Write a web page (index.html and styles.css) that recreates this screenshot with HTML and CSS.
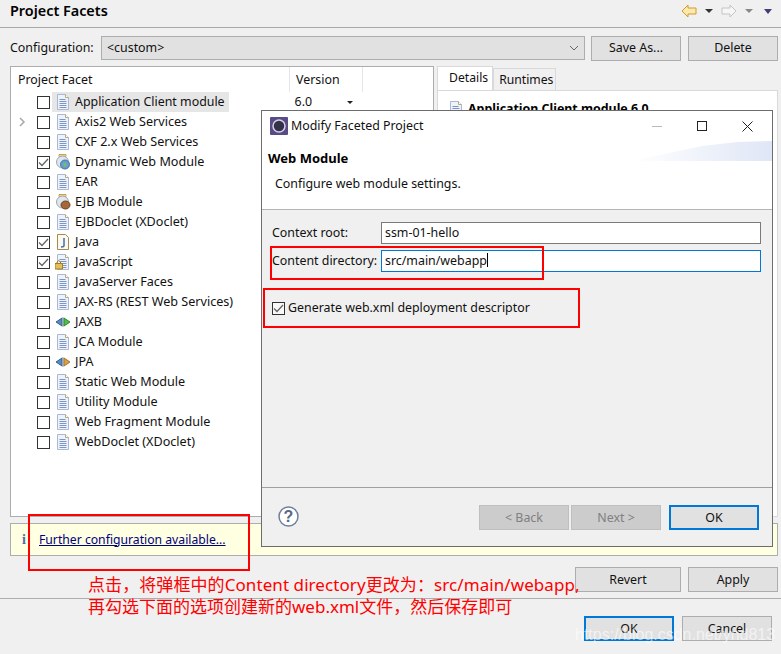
FILE: index.html
```html
<!DOCTYPE html>
<html lang="en">
<head>
<meta charset="utf-8">
<title>Project Facets</title>
<link rel="stylesheet" href="styles.css">
</head>
<body>
<svg class="defs" width="0" height="0">
  <symbol id="doc" viewBox="0 0 16 16">
    <path d="M2.500 .5h8l3 3v12h-11z" fill="#eef2fa" stroke="#a9b8d6"/>
    <path d="M10.500 .5v3h3" fill="#fff" stroke="#b9a878"/>
    <path d="M4.500 5.500h6M4.500 7.500h7M4.500 9.500h7M4.500 11.500h7M4.500 13.500h7" stroke="#7d95c4"/>
  </symbol>
  <symbol id="jar" viewBox="0 0 16 16">
    <path d="M4 .5h7v2H4z" fill="#f4dd9c" stroke="#c9a24f"/>
    <circle cx="7.500" cy="8" r="6" fill="#dfe6ee" stroke="#9aa7b5"/>
  </symbol>
  <symbol id="arrows" viewBox="0 0 16 16">
    <path d="M7 4v8L1 8z" fill="#5b8ac0" stroke="#34628f"/>
    <path d="M8 3v10" stroke="#8aa0b8"/>
  </symbol>
  <symbol id="tick" viewBox="0 0 11 9">
    <path d="M1 4.500l3 3 6-6.500" fill="none" stroke="#666" stroke-width="1.300"/>
  </symbol>
</svg>

<header class="page-head">
  <h1 class="page-title">Project Facets</h1>
  <div class="nav-icons">
    <svg width="16" height="14" viewBox="0 0 16 14"><path d="M1 7l6-6v3h8v6H7v3z" fill="#fbe9b0" stroke="#d39a2a"/></svg>
    <i class="caret dark"></i>
    <svg width="16" height="14" viewBox="0 0 16 14"><path d="M15 7L9 1v3H1v6h8v3z" fill="#f6f6f6" stroke="#c4c4c4"/></svg>
    <i class="caret grey"></i>
    <i class="caret purple"></i>
  </div>
</header>

<main class="content">
  <div class="config-row">
    <span class="config-label">Configuration:</span>
    <div class="combo"><span>&lt;custom&gt;</span>
      <svg width="10" height="6" viewBox="0 0 10 6"><path d="M1 1l4 4 4-4" fill="none" stroke="#666"/></svg>
    </div>
    <button class="btn w-save">Save As...</button>
    <button class="btn w-delete">Delete</button>
  </div>

  <div class="panels">
    <section class="facets">
      <div class="facet-head">
        <span class="col-name">Project Facet</span>
        <span class="col-version">Version</span>
      </div>
      <ul class="facet-list">
        <li class="facet"><span class="twisty"></span><span class="check"></span><span class="fcell selected"><svg class="ficon"><use href="#doc"/></svg><span class="fname tight">Application Client module</span></span><span class="fversion">6.0<i class="caret mini"></i></span></li>
        <li class="facet"><span class="twisty"><svg width="7" height="10" viewBox="0 0 7 10"><path d="M1 1l4 4-4 4" fill="none" stroke="#a8a8a8" stroke-width="1.500"/></svg></span><span class="check"></span><span class="fcell"><svg class="ficon"><use href="#doc"/></svg><span class="fname">Axis2 Web Services</span></span></li>
        <li class="facet"><span class="twisty"></span><span class="check"></span><span class="fcell"><svg class="ficon"><use href="#doc"/></svg><span class="fname">CXF 2.x Web Services</span></span></li>
        <li class="facet"><span class="twisty"></span><span class="check"><svg class="tick"><use href="#tick"/></svg></span><span class="fcell"><svg class="ficon" viewBox="0 0 16 16"><use href="#jar" width="16" height="16"/><circle cx="10" cy="10.500" r="4.500" fill="#5f9fd6" stroke="#47719b"/><path d="M8 9h3l1 3-3 1z" fill="#7fb86a"/></svg><span class="fname">Dynamic Web Module</span></span></li>
        <li class="facet"><span class="twisty"></span><span class="check"></span><span class="fcell"><svg class="ficon"><use href="#doc"/></svg><span class="fname">EAR</span></span></li>
        <li class="facet"><span class="twisty"></span><span class="check"></span><span class="fcell"><svg class="ficon" viewBox="0 0 16 16"><use href="#jar" width="16" height="16"/><ellipse cx="10.500" cy="11" rx="4.500" ry="4" fill="#a5663a" stroke="#6e3f1f"/></svg><span class="fname">EJB Module</span></span></li>
        <li class="facet"><span class="twisty"></span><span class="check"></span><span class="fcell"><svg class="ficon"><use href="#doc"/></svg><span class="fname">EJBDoclet (XDoclet)</span></span></li>
        <li class="facet"><span class="twisty"></span><span class="check"><svg class="tick"><use href="#tick"/></svg></span><span class="fcell"><svg class="ficon" viewBox="0 0 16 16"><path d="M2.500.5h8l3 3v12h-11z" fill="#fbf8ee" stroke="#a58a4c"/><path d="M9 4v7.500q0 1.500-3 1.500" fill="none" stroke="#3f6fb5" stroke-width="1.500"/></svg><span class="fname">Java</span></span></li>
        <li class="facet"><span class="twisty"></span><span class="check"><svg class="tick"><use href="#tick"/></svg></span><span class="fcell"><svg class="ficon" viewBox="0 0 16 16"><use href="#doc" width="16" height="16"/><path d="M0 9.500h7.500V15H0z" fill="#e5bf54" stroke="#a17f22"/><path d="M2 9.500V8q1.700-3 3.500 0v1.500" fill="none" stroke="#a17f22"/></svg><span class="fname">JavaScript</span></span></li>
        <li class="facet"><span class="twisty"></span><span class="check"></span><span class="fcell"><svg class="ficon"><use href="#doc"/></svg><span class="fname">JavaServer Faces</span></span></li>
        <li class="facet"><span class="twisty"></span><span class="check"></span><span class="fcell"><svg class="ficon"><use href="#doc"/></svg><span class="fname">JAX-RS (REST Web Services)</span></span></li>
        <li class="facet"><span class="twisty"></span><span class="check"></span><span class="fcell"><svg class="ficon" viewBox="0 0 16 16"><use href="#arrows" width="16" height="16"/><path d="M9 4v8l6-4z" fill="#58b94e" stroke="#2f8a2a"/></svg><span class="fname">JAXB</span></span></li>
        <li class="facet"><span class="twisty"></span><span class="check"></span><span class="fcell"><svg class="ficon"><use href="#doc"/></svg><span class="fname">JCA Module</span></span></li>
        <li class="facet"><span class="twisty"></span><span class="check"></span><span class="fcell"><svg class="ficon" viewBox="0 0 16 16"><use href="#arrows" width="16" height="16"/><path d="M9 4v8l6-4z" fill="#d9a04c" stroke="#a4742a"/></svg><span class="fname">JPA</span></span></li>
        <li class="facet"><span class="twisty"></span><span class="check"></span><span class="fcell"><svg class="ficon"><use href="#doc"/></svg><span class="fname">Static Web Module</span></span></li>
        <li class="facet"><span class="twisty"></span><span class="check"></span><span class="fcell"><svg class="ficon"><use href="#doc"/></svg><span class="fname">Utility Module</span></span></li>
        <li class="facet"><span class="twisty"></span><span class="check"></span><span class="fcell"><svg class="ficon"><use href="#doc"/></svg><span class="fname">Web Fragment Module</span></span></li>
        <li class="facet"><span class="twisty"></span><span class="check"></span><span class="fcell"><svg class="ficon"><use href="#doc"/></svg><span class="fname">WebDoclet (XDoclet)</span></span></li>
      </ul>
    </section>
    <section class="details">
      <div class="tabs">
        <span class="tab active">Details</span>
        <span class="tab">Runtimes</span>
      </div>
      <div class="tab-body">
        <svg class="ficon"><use href="#doc"/></svg>
        <strong>Application Client module 6.0</strong>
      </div>
    </section>
  </div>

  <div class="info-bar">
    <span class="info-i">i</span>
    <a class="info-link" href="#">Further configuration available...</a>
  </div>

  <div class="revert-row">
    <button class="btn w-revert">Revert</button>
    <button class="btn w-apply">Apply</button>
  </div>
</main>

<footer class="page-foot">
  <button class="btn primary w-ok">OK</button>
  <button class="btn w-cancel">Cancel</button>
</footer>

<div class="dialog">
  <div class="dlg-title">
    <svg width="18" height="18" viewBox="0 0 18 18"><rect width="18" height="18" rx="1" fill="#5a4a86"/><circle cx="9" cy="9" r="6" fill="#33324a" stroke="#d5d3e0" stroke-width="1.500"/></svg>
    <span class="dlg-name">Modify Faceted Project</span>
    <div class="win-btns">
      <i class="win-min"></i>
      <i class="win-max"></i>
      <svg width="11" height="11" viewBox="0 0 11 11"><path d="M.5.500l10 10M10.500.500l-10 10" stroke="#222"/></svg>
    </div>
  </div>
  <div class="dlg-banner">
    <h2 class="banner-title">Web Module</h2>
    <p class="banner-sub">Configure web module settings.</p>
  </div>
  <div class="dlg-body">
    <label class="field">
      <span class="field-label">Context root:</span>
      <span class="input">ssm-01-hello</span>
    </label>
    <label class="field">
      <span class="field-label">Content directory:</span>
      <span class="input focus">src/main/webapp<i class="cursor"></i></span>
    </label>
    <label class="gen-row">
      <span class="check small"><svg class="tick"><use href="#tick"/></svg></span>
      <span>Generate web.xml deployment descriptor</span>
    </label>
  </div>
  <div class="dlg-foot">
    <svg class="help" width="21" height="21" viewBox="0 0 21 21"><circle cx="10.500" cy="10.500" r="9.500" fill="#fff" stroke="#6f7f99" stroke-width="1.500"/><text x="10.500" y="16" class="help-q">?</text></svg>
    <button class="btn disabled w-back">&lt; Back</button>
    <button class="btn disabled w-next">Next &gt;</button>
    <button class="btn primary w-dok">OK</button>
  </div>
</div>

<div class="mark m1"></div>
<div class="mark m2"></div>
<div class="mark m3"></div>
<p class="note"><span class="note-first">点击，将弹框中的Content directory更改为：src/main/webapp,</span><br>再勾选下面的选项创建新的web.xml文件，然后保存即可</p>
<span class="watermark">https://blog.csdn.net/ynd813</span>
</body>
</html>
```
FILE: styles.css
```css
* { box-sizing: border-box; }
html, body { margin: 0; padding: 0; }
body {
  width: 781px;
  height: 654px;
  overflow: hidden;
  position: relative;
  background: #f0f0f0;
  color: #111;
  font: 12.400px/20px "Noto Sans", "Noto Sans CJK SC", sans-serif;
}
.defs { position: absolute; }

.page-head {
  height: 28px;
  display: flex;
  align-items: center;
  justify-content: space-between;
  padding: 0 9px 5px 10px;
  border-bottom: 1px solid #a8a8a8;
}
.page-title { margin: 0; font-size: 14.400px; font-weight: 600; color: #000; }
.nav-icons { display: flex; align-items: center; gap: 8px; }
.caret { display: block; width: 0; height: 0; border: 4px solid transparent; border-bottom: 0; }
.caret.dark { border-top-color: #333; }
.caret.grey { border-top-color: #888; }
.caret.purple { border-width: 5px 4.500px 0; border-top-color: #4b3a78; margin-left: 3px; }
.caret.mini { border-width: 3px 3px 0; border-top-color: #222; margin-left: 35px; display: inline-block; vertical-align: middle; }

.content { padding: 8px 3px 0 10px; height: 570px; }
.config-row { display: flex; align-items: center; height: 24px; margin-bottom: 6px; }
.config-label { width: 91px; }
.combo {
  width: 484px; height: 24px; display: flex; align-items: center; justify-content: space-between;
  padding: 0 5px; background: #e1e1e1; border: 1px solid #adadad; margin-right: 6px;
}
.btn {
  height: 25px; padding: 0; font: inherit; color: #111; background: #e1e1e1;
  border: 1px solid #adadad; border-radius: 0;
}
.btn.primary { border: 2px solid #0078d7; }
.btn.disabled { background: #ccc; border-color: #bfbfbf; color: #808080; }
.w-save { width: 90px; margin-right: 7px; }
.w-delete { width: 90px; }

.panels { display: flex; height: 451px; }
.facets { width: 424px; background: #fff; border: 1px solid #adadad; margin-right: 3px; overflow: hidden; }
.facet-head { display: flex; height: 25px; align-items: center; }
.col-name { width: 278px; padding-left: 7px; }
.col-version { width: 74px; height: 25px; padding-left: 6px; line-height: 25px; border-left: 1px solid #e5e5e5; border-right: 1px solid #e5e5e5; }
.facet-list { margin: 0; padding: 0; list-style: none; font-size: 12.600px; }
.facet { height: 20px; display: flex; align-items: center; }
.twisty { width: 26px; display: flex; justify-content: flex-end; padding-right: 11px; }
.check {
  width: 13px; height: 13px; flex: none; display: flex; align-items: center; justify-content: center;
  border: 1px solid #333; background: #fff;
}
.check.small { margin-right: 3px; background: #f8f8f8; }
.tick { width: 11px; height: 9px; }
.fcell { display: flex; align-items: center; height: 20px; margin-left: 2px; padding-right: 4px; }
.fcell.selected { background: #e6e6e6; }
.fname.tight { font-size: 12.400px; }
.ficon { width: 16px; height: 16px; margin: 0 4px 0 3px; flex: none; }
.fversion { margin-left: 66px; font-size: 12.400px; }

.details { width: 341px; }
.tabs { display: flex; height: 24px; align-items: flex-end; font-size: 12.200px; }
.tab { padding: 0 2px 0 5px; height: 22px; line-height: 22px; border: 1px solid #d9d9d9; border-bottom: 0; background: #f0f0f0; }
.tab.active { height: 24px; line-height: 22px; padding: 0 4px 0 11px; background: #fff; }
.tab-body { height: 427px; background: #fff; border: 1px solid #d9d9d9; padding: 8px 10px; display: flex; align-items: flex-start; }
.tab-body .ficon { margin: 2px 4px 0 0; }
.tab-body strong { font-weight: 700; color: #000; }

.info-bar {
  margin-top: 6px; height: 33px; background: #ffffe1; border: 1px solid #adadad;
  display: flex; align-items: center; padding-left: 11px;
}
.info-i { width: 17px; font: 700 14px/20px "Liberation Serif", serif; color: #4f6fa8; }
.info-link { color: #000080; font-size: 12.200px; }
.revert-row { display: flex; justify-content: flex-end; gap: 7px; margin-top: 11px; }
.w-revert { width: 106px; }
.w-apply { width: 90px; }

.page-foot {
  border-top: 1px solid #adadad; height: 56px; display: flex; justify-content: flex-end;
  gap: 8px; padding: 17px 9px 0 0;
}
.w-ok, .w-cancel { width: 90px; }

.dialog {
  position: absolute; left: 261px; top: 110px; width: 512px; height: 437px;
  background: #f0f0f0; border: 1px solid #6d6d6d; display: flex; flex-direction: column;
}
.dlg-title { height: 30px; background: #fff; display: flex; align-items: center; padding: 0 19px 0 8px; }
.dlg-name { margin-left: 3px; flex: 1; }
.win-btns { display: flex; align-items: center; gap: 35px; }
.win-min { display: block; width: 10px; height: 1px; background: #bbb; }
.win-max { display: block; width: 10px; height: 10px; border: 1px solid #222; }
.dlg-banner {
  height: 69px; padding: 7px 6px 0; position: relative;
  background: #fff;
  border-bottom: 1px solid #b5b5b5;
}
.dlg-banner::after {
  content: ""; position: absolute; right: 0; top: 0; width: 140px; height: 20px;
  background: linear-gradient(to right, #fff, #dfe6f6);
  clip-path: polygon(0 100%, 50% 25%, 75% 5%, 100% 0, 100% 100%);
}
.banner-title { margin: 0; font-size: 13px; font-weight: 700; color: #000; line-height: 20px; }
.banner-sub { margin: 6px 0 0 7px; line-height: 20px; }
.dlg-body { flex: 1; padding: 12px 11px 0 10px; border-bottom: 1px solid #a0a0a0; }
.field { display: flex; align-items: center; height: 22px; margin-bottom: 6px; }
.field-label { width: 109px; flex: none; }
.input { flex: 1; height: 22px; line-height: 20px; padding-left: 3px; background: #fff; border: 1px solid #7a7a7a; }
.input.focus { border-color: #0078d7; }
.cursor { display: inline-block; width: 1px; height: 14px; background: #000; vertical-align: -2px; }
.gen-row { display: flex; align-items: center; margin-top: 26px; height: 20px; }
.dlg-foot { height: 58px; display: flex; align-items: flex-start; padding: 17px 12px 0 16px; }
.help { margin-top: 1px; margin-right: 180px; }
.help-q { font: 700 16px "Liberation Sans", sans-serif; fill: #56698a; text-anchor: middle; }
.w-back { width: 90px; margin-right: 2px; }
.w-next { width: 90px; margin-right: 8px; }
.w-dok { width: 90px; }

.mark { position: absolute; border: 2px solid #f00; }
.m1 { left: 270px; top: 246px; width: 274px; height: 34px; }
.m2 { left: 263px; top: 288px; width: 317px; height: 40px; }
.m3 { left: 28px; top: 514px; width: 222px; height: 57px; }
.note {
  position: absolute; left: 88px; top: 574px; margin: 0; color: #f00; font-size: 17px; line-height: 22px;
  font-family: "Noto Sans", "Noto Sans CJK SC", sans-serif; white-space: nowrap;
}
.note-first { letter-spacing: .08px; }
.watermark {
  position: absolute; left: 575px; top: 624px; color: rgba(255,255,255,.6); font: 16px/22px "Liberation Sans", sans-serif;
}
```
